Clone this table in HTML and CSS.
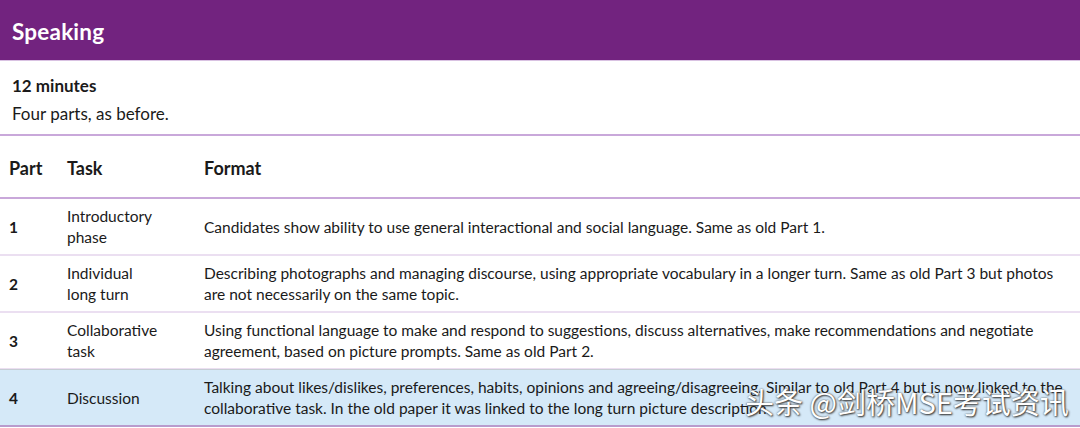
FILE: index.html
```html
<!DOCTYPE html>
<html lang="en">
<head>
<meta charset="utf-8">
<link rel="stylesheet" href="styles.css">
</head>
<body>
<div class="page">
  <header class="banner"><h1>Speaking</h1></header>
  <section class="intro">
    <p class="duration">12 minutes</p>
    <p class="summary">Four parts, as before.</p>
  </section>
  <div class="table">
    <div class="row head">
      <div class="c-part">Part</div>
      <div class="c-task">Task</div>
      <div class="c-format">Format</div>
    </div>
    <div class="row">
      <div class="c-part num">1</div>
      <div class="c-task">Introductory<br>phase</div>
      <div class="c-format">Candidates show ability to use general interactional and social language. Same as old Part 1.</div>
    </div>
    <div class="row">
      <div class="c-part num">2</div>
      <div class="c-task">Individual<br>long turn</div>
      <div class="c-format">Describing photographs and managing discourse, using appropriate vocabulary in a longer turn. Same as old Part 3 but photos are not necessarily on the same topic.</div>
    </div>
    <div class="row">
      <div class="c-part num">3</div>
      <div class="c-task">Collaborative<br>task</div>
      <div class="c-format">Using functional language to make and respond to suggestions, discuss alternatives, make recommendations and negotiate agreement, based on picture prompts. Same as old Part 2.</div>
    </div>
    <div class="row hl">
      <div class="c-part num">4</div>
      <div class="c-task">Discussion</div>
      <div class="c-format">Talking about likes/dislikes, preferences, habits, opinions and agreeing/disagreeing. Similar to old Part 4 but is now linked to the collaborative task. In the old paper it was linked to the long turn picture description.</div>
    </div>
  </div>
  <div class="watermark">头条 @剑桥MSE考试资讯</div>
</div>
</body>
</html>
```
FILE: styles.css
```css
html, body { margin: 0; padding: 0; background: #fff; }
body { font-family: Lato, "Noto Sans", sans-serif; color: #1a1a1a; }
.page { position: relative; width: 1080px; height: 428px; overflow: hidden; }
.banner { height: 61px; background: #72237f; border-bottom: 1px solid #d9c2e2; display: flex; align-items: center; padding: 2px 0 0 12px; box-sizing: border-box; }
.banner h1 { margin: 0; color: #fff; font-size: 22.5px; font-weight: 700; letter-spacing: 0.2px; }
.intro { height: 73px; padding: 11px 12px 0; box-sizing: border-box; }
.intro p { margin: 0; font-size: 17px; line-height: 28px; }
.duration { font-weight: 700; }
.table { border-top: 2px solid #c9a8da; }
.row { display: flex; align-items: center; height: 57px; border-bottom: 2px solid #ebdff1; box-sizing: border-box; font-size: 15.5px; line-height: 21px; padding-top: 1px; }
.row.head { height: 63px; border-bottom: 2px solid #c9a8da; font-weight: 700; font-size: 18px; padding-top: 3px; }
.c-part { width: 58px; padding-left: 9px; flex: none; }
.c-task { width: 137px; flex: none; }
.c-format { flex: 1; padding-right: 16px; }
.num { font-weight: 700; }
.row.hl { background: #d5e9f8; border-top: 1px solid #c6ccd4; border-bottom: 2px solid #b99bcd; height: 58px; margin-top: -1px; }
.watermark { position: absolute; left: 745px; top: 380px; font-family: "Noto Sans CJK SC", sans-serif; font-size: 29px; color: #fff; text-shadow: 1px 1px 2px #333, 0 0 2px #555; white-space: nowrap; }
```
